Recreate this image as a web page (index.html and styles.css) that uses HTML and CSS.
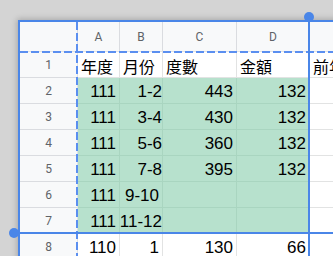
FILE: index.html
```html
<!DOCTYPE html>
<html lang="zh-Hant">
<head>
<meta charset="utf-8">
<title>工作表</title>
<link rel="stylesheet" href="styles.css">
</head>
<body>
<div class="frame">
  <div class="sheet">
    <div class="corner"></div>
    <div class="colhdr">A</div>
    <div class="colhdr">B</div>
    <div class="colhdr">C</div>
    <div class="colhdr">D</div>
    <div class="colhdr"></div>

    <div class="rowhdr">1</div>
    <div class="cell txt">年度</div>
    <div class="cell txt">月份</div>
    <div class="cell txt">度數</div>
    <div class="cell txt">金額</div>
    <div class="cell txt">前年度</div>

    <div class="rowhdr">2</div>
    <div class="cell fill">111</div>
    <div class="cell fill tight">1-2</div>
    <div class="cell fill">443</div>
    <div class="cell fill">132</div>
    <div class="cell"></div>

    <div class="rowhdr">3</div>
    <div class="cell fill">111</div>
    <div class="cell fill tight">3-4</div>
    <div class="cell fill">430</div>
    <div class="cell fill">132</div>
    <div class="cell"></div>

    <div class="rowhdr">4</div>
    <div class="cell fill">111</div>
    <div class="cell fill tight">5-6</div>
    <div class="cell fill">360</div>
    <div class="cell fill">132</div>
    <div class="cell"></div>

    <div class="rowhdr">5</div>
    <div class="cell fill">111</div>
    <div class="cell fill tight">7-8</div>
    <div class="cell fill">395</div>
    <div class="cell fill">132</div>
    <div class="cell"></div>

    <div class="rowhdr">6</div>
    <div class="cell fill">111</div>
    <div class="cell fill">9-10</div>
    <div class="cell fill"></div>
    <div class="cell fill"></div>
    <div class="cell"></div>

    <div class="rowhdr">7</div>
    <div class="cell fill">111</div>
    <div class="cell fill tight">11-12</div>
    <div class="cell fill"></div>
    <div class="cell fill"></div>
    <div class="cell"></div>

    <div class="rowhdr">8</div>
    <div class="cell">110</div>
    <div class="cell">1</div>
    <div class="cell">130</div>
    <div class="cell">66</div>
    <div class="cell"></div>
  </div>

  <!-- selection guides drawn over the grid -->
  <div class="dash dash-h"></div>
  <div class="dash dash-v"></div>
  <div class="guide guide-v"></div>
  <div class="guide guide-h"></div>
  <div class="knob knob-top"></div>
  <div class="knob knob-left"></div>
</div>
</body>
</html>
```

FILE: styles.css
```css
html, body {
  margin: 0;
  padding: 0;
}

body {
  width: 333px;
  height: 256px;
  overflow: hidden;
  background: #d4d4d4;
}

.frame {
  position: relative;
  margin: 20px 0 0 18px;
  width: 420px;
  height: 260px;
  border-top: 2px solid #4a86e8;
  border-left: 2px solid #4a86e8;
  background: #fff;
  box-shadow: 0 0 6px 1px rgba(0, 0, 0, 0.22);
}

.sheet {
  display: grid;
  grid-template-columns: 58px 42px 43px 74px 73px 120px;
  grid-template-rows: 30px repeat(8, 26px);
  font-family: "Liberation Sans", Arial, "Noto Sans CJK TC", sans-serif;
  font-size: 17px;
  color: #000;
}

.sheet > div {
  box-sizing: border-box;
  border-right: 1px solid #e2e3e3;
  border-bottom: 1px solid #e2e3e3;
  white-space: nowrap;
  display: flex;
}

.corner,
.colhdr,
.rowhdr {
  background: #f8f9fa;
  color: #5f6368;
  font-family: Roboto, "Liberation Sans", sans-serif;
  font-size: 12px;
  align-items: center;
  justify-content: center;
}

.sheet > .colhdr,
.sheet > .corner {
  border-right-color: #dadce0;
}

.sheet > .rowhdr {
  border-bottom-color: #dadce0;
  padding-top: 1px;
}

.cell {
  align-items: flex-end;
  justify-content: flex-end;
  padding: 0 3px 1px 0;
  line-height: 20px;
}

.cell.txt {
  justify-content: flex-start;
  padding-left: 3px;
  font-family: "Noto Sans CJK TC", sans-serif;
  font-size: 16px;
  padding-bottom: 1px;
}

.sheet > .fill {
  background: #b7e1cd;
  border-right-color: #a9d5c0;
  border-bottom-color: #a9d5c0;
}

.cell.tight {
  padding-right: 0;
}

/* dashed marching-ants edges of the frozen header */
.dash {
  position: absolute;
}

.dash-h {
  left: 0;
  right: 0;
  top: 29px;
  height: 2px;
  background: repeating-linear-gradient(90deg, #5b8ff0 0 8px, transparent 8px 11px);
}

.dash-v {
  top: 0;
  bottom: 0;
  left: 56px;
  width: 2px;
  background: repeating-linear-gradient(180deg, #5b8ff0 0 8px, transparent 8px 11px);
}

/* solid crop guides with their drag knobs */
.guide {
  position: absolute;
  background: #4a86e8;
}

.guide-v {
  left: 288px;
  top: -5px;
  bottom: 0;
  width: 2px;
}

.guide-h {
  top: 210px;
  left: -6px;
  right: 0;
  height: 2px;
}

.knob {
  position: absolute;
  width: 10px;
  height: 10px;
  border-radius: 50%;
  background: #4a86e8;
}

.knob-top {
  left: 284px;
  top: -10px;
}

.knob-left {
  left: -11px;
  top: 206px;
}
```
